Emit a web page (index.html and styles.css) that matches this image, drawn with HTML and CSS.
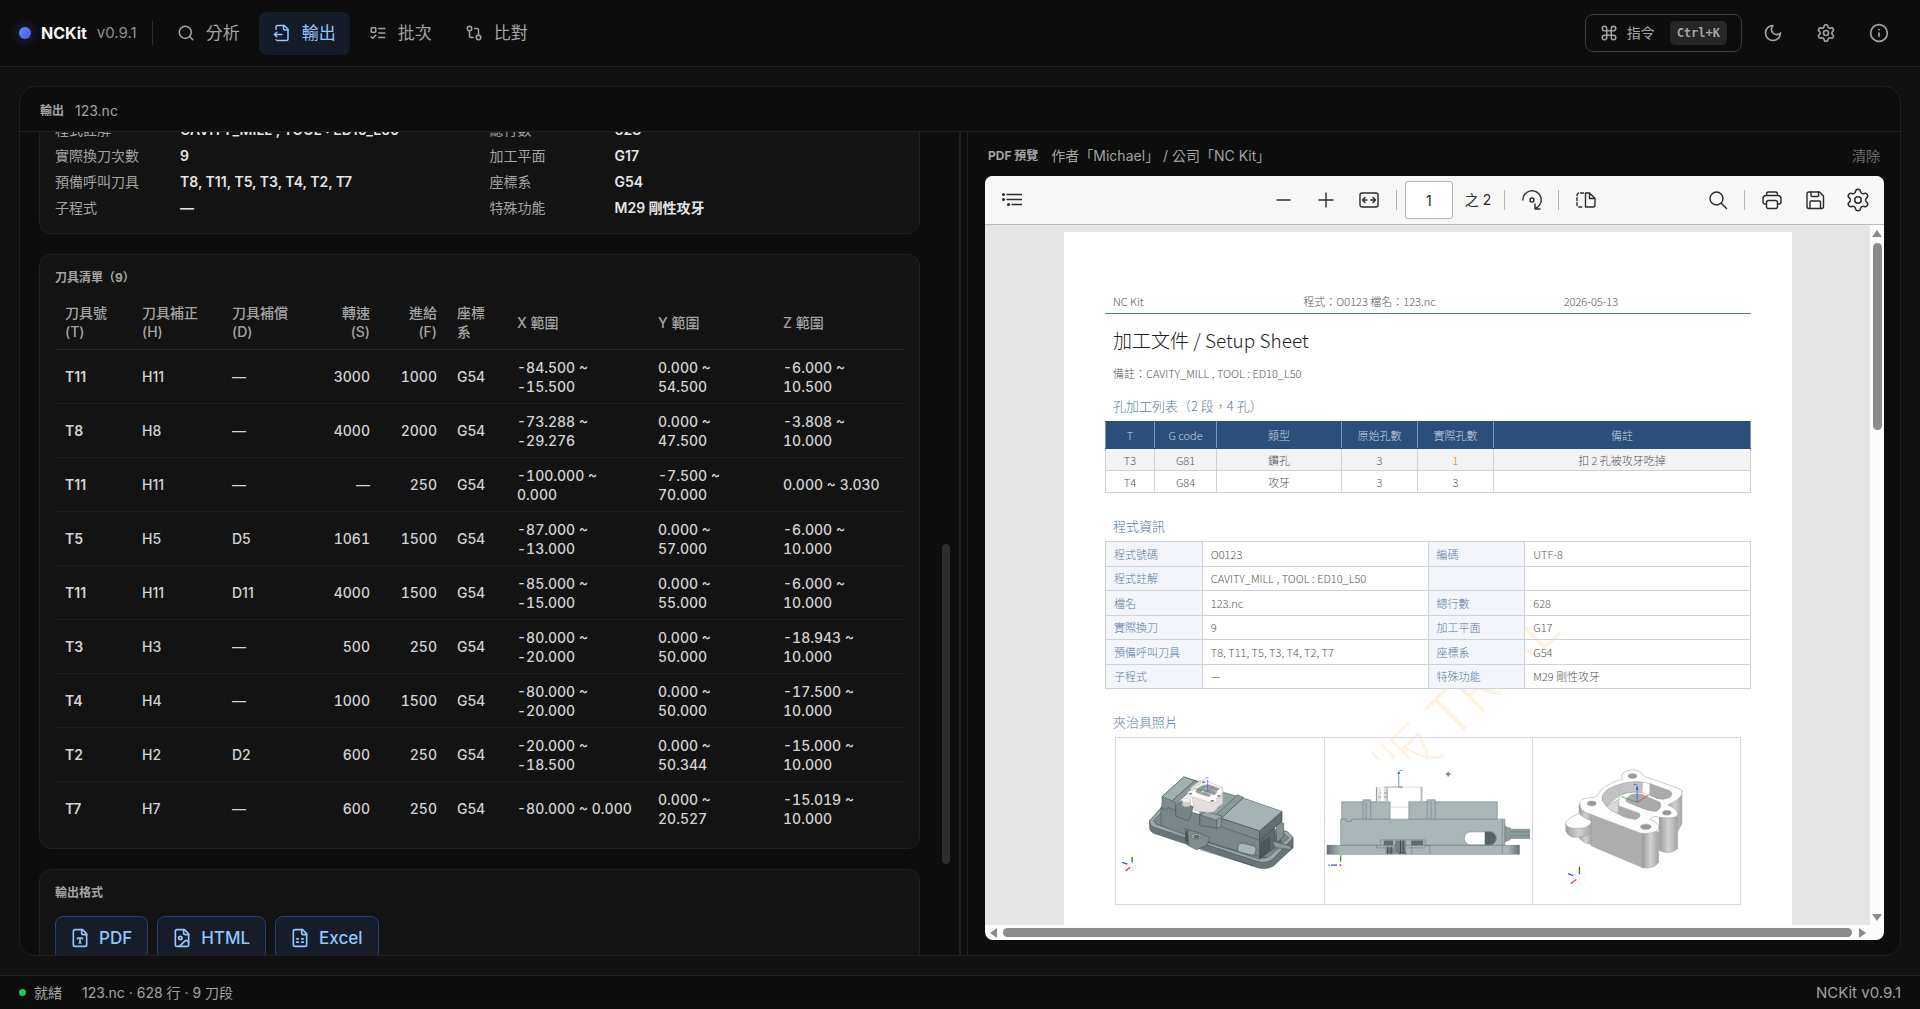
FILE: index.html
```html
<!DOCTYPE html>
<html lang="zh-Hant">
<head>
<meta charset="utf-8">
<title>NCKit</title>
<link rel="stylesheet" href="styles.css">
</head>
<body>
<svg class="sprite" aria-hidden="true">
  <symbol id="i-search" viewBox="0 0 24 24"><circle cx="11" cy="11" r="8"/><path d="m21 21-4.3-4.3"/></symbol>
  <symbol id="i-output" viewBox="0 0 24 24"><path d="M14 2v4a2 2 0 0 0 2 2h4"/><path d="M4 7V4a2 2 0 0 1 2-2h9l5 5v13a2 2 0 0 1-2 2H6a2 2 0 0 1-1.94-1"/><path d="m5 11-3 3"/><path d="m5 17-3-3h10"/></symbol>
  <symbol id="i-todo" viewBox="0 0 24 24"><rect x="3" y="5" width="6" height="6" rx="1"/><path d="m3 17 2 2 4-4M13 6h8M13 12h8M13 18h8"/></symbol>
  <symbol id="i-compare" viewBox="0 0 24 24"><circle cx="18" cy="18" r="3"/><circle cx="6" cy="6" r="3"/><path d="M13 6h3a2 2 0 0 1 2 2v7M11 18H8a2 2 0 0 1-2-2V9"/></symbol>
  <symbol id="i-command" viewBox="0 0 24 24"><path d="M15 6v12a3 3 0 1 0 3-3H6a3 3 0 1 0 3 3V6a3 3 0 1 0-3 3h12a3 3 0 1 0-3-3"/></symbol>
  <symbol id="i-moon" viewBox="0 0 24 24"><path d="M12 3a6 6 0 0 0 9 9 9 9 0 1 1-9-9Z"/></symbol>
  <symbol id="i-gear" viewBox="0 0 24 24"><path d="M9.671 4.136a2.34 2.34 0 0 1 4.659 0 2.34 2.34 0 0 0 3.319 1.915 2.34 2.34 0 0 1 2.33 4.033 2.34 2.34 0 0 0 0 3.831 2.34 2.34 0 0 1-2.33 4.033 2.34 2.34 0 0 0-3.319 1.915 2.34 2.34 0 0 1-4.659 0 2.34 2.34 0 0 0-3.32-1.915 2.34 2.34 0 0 1-2.33-4.033 2.34 2.34 0 0 0 0-3.831A2.34 2.34 0 0 1 6.35 6.051a2.34 2.34 0 0 0 3.319-1.915"/><circle cx="12" cy="12" r="3"/></symbol>
  <symbol id="i-info" viewBox="0 0 24 24"><circle cx="12" cy="12" r="10"/><path d="M12 16v-4M12 8h.01"/></symbol>
  <symbol id="i-pdf" viewBox="0 0 24 24"><path d="M15 2H6a2 2 0 0 0-2 2v16a2 2 0 0 0 2 2h12a2 2 0 0 0 2-2V7Z"/><path d="M14 2v4a2 2 0 0 0 2 2h4M9 13v-1h6v1M12 12v6M11 18h2"/></symbol>
  <symbol id="i-html" viewBox="0 0 24 24"><path d="M15 2H6a2 2 0 0 0-2 2v16a2 2 0 0 0 2 2h12a2 2 0 0 0 2-2V7Z"/><path d="M14 2v4a2 2 0 0 0 2 2h4"/><circle cx="10" cy="12" r="2"/><path d="m20 17-1.296-1.296a2.41 2.41 0 0 0-3.408 0L9 22"/></symbol>
  <symbol id="i-excel" viewBox="0 0 24 24"><path d="M15 2H6a2 2 0 0 0-2 2v16a2 2 0 0 0 2 2h12a2 2 0 0 0 2-2V7Z"/><path d="M14 2v4a2 2 0 0 0 2 2h4M8 13h2M14 13h2M8 17h2M14 17h2"/></symbol>
</svg>

<header class="topbar">
  <div class="brand"><span class="brand-dot"></span><strong class="brand-name">NCKit</strong><span class="brand-version">v0.9.1</span></div>
  <nav class="tabs">
    <button class="tab"><svg class="icon icon-md"><use href="#i-search"/></svg>分析</button>
    <button class="tab tab-active"><svg class="icon icon-md"><use href="#i-output"/></svg>輸出</button>
    <button class="tab"><svg class="icon icon-md"><use href="#i-todo"/></svg>批次</button>
    <button class="tab"><svg class="icon icon-md"><use href="#i-compare"/></svg>比對</button>
  </nav>
  <div class="tools">
    <button class="command"><svg class="icon icon-md"><use href="#i-command"/></svg>指令<kbd class="keys">Ctrl+K</kbd></button>
    <button class="tool" aria-label="主題"><svg class="icon icon-lg"><use href="#i-moon"/></svg></button>
    <button class="tool" aria-label="設定"><svg class="icon icon-lg"><use href="#i-gear"/></svg></button>
    <button class="tool" aria-label="關於"><svg class="icon icon-lg"><use href="#i-info"/></svg></button>
  </div>
</header>

<main class="workspace">
  <section class="panel">
    <header class="panel-head"><h1 class="label">輸出</h1><span>123.nc</span></header>
    <div class="split">
      <div class="pane">
        <div class="pane-content">
          <section class="card">
            <dl class="facts">
              <div class="fact"><dt>程式註解</dt><dd>CAVITY_MILL , TOOL : ED10_L50</dd></div>
              <div class="fact"><dt>總行數</dt><dd>628</dd></div>
              <div class="fact"><dt>實際換刀次數</dt><dd>9</dd></div>
              <div class="fact"><dt>加工平面</dt><dd>G17</dd></div>
              <div class="fact"><dt>預備呼叫刀具</dt><dd>T8, T11, T5, T3, T4, T2, T7</dd></div>
              <div class="fact"><dt>座標系</dt><dd>G54</dd></div>
              <div class="fact"><dt>子程式</dt><dd>—</dd></div>
              <div class="fact"><dt>特殊功能</dt><dd>M29 剛性攻牙</dd></div>
            </dl>
          </section>
          <section class="card">
            <h2 class="label">刀具清單（9）</h2>
            <table class="tool-table">
              <colgroup><col class="c-t"><col class="c-h"><col class="c-d"><col class="c-s"><col class="c-f"><col class="c-g"><col class="c-x"><col class="c-y"><col class="c-z"></colgroup>
              <thead><tr><th>刀具號<br>(T)</th><th>刀具補正<br>(H)</th><th>刀具補償<br>(D)</th><th class="right">轉速<br>(S)</th><th class="right">進給<br>(F)</th><th>座標系</th><th>X 範圍</th><th>Y 範圍</th><th>Z 範圍</th></tr></thead>
              <tbody>
                <tr><td class="tool-id">T11</td><td>H11</td><td>—</td><td class="right num">3000</td><td class="right num">1000</td><td>G54</td><td class="num">-84.500 ~ -15.500</td><td class="num">0.000 ~ 54.500</td><td class="num">-6.000 ~ 10.500</td></tr>
                <tr><td class="tool-id">T8</td><td>H8</td><td>—</td><td class="right num">4000</td><td class="right num">2000</td><td>G54</td><td class="num">-73.288 ~ -29.276</td><td class="num">0.000 ~ 47.500</td><td class="num">-3.808 ~ 10.000</td></tr>
                <tr><td class="tool-id">T11</td><td>H11</td><td>—</td><td class="right num">—</td><td class="right num">250</td><td>G54</td><td class="num">-100.000 ~ 0.000</td><td class="num">-7.500 ~ 70.000</td><td class="num">0.000 ~ 3.030</td></tr>
                <tr><td class="tool-id">T5</td><td>H5</td><td>D5</td><td class="right num">1061</td><td class="right num">1500</td><td>G54</td><td class="num">-87.000 ~ -13.000</td><td class="num">0.000 ~ 57.000</td><td class="num">-6.000 ~ 10.000</td></tr>
                <tr><td class="tool-id">T11</td><td>H11</td><td>D11</td><td class="right num">4000</td><td class="right num">1500</td><td>G54</td><td class="num">-85.000 ~ -15.000</td><td class="num">0.000 ~ 55.000</td><td class="num">-6.000 ~ 10.000</td></tr>
                <tr><td class="tool-id">T3</td><td>H3</td><td>—</td><td class="right num">500</td><td class="right num">250</td><td>G54</td><td class="num">-80.000 ~ -20.000</td><td class="num">0.000 ~ 50.000</td><td class="num">-18.943 ~ 10.000</td></tr>
                <tr><td class="tool-id">T4</td><td>H4</td><td>—</td><td class="right num">1000</td><td class="right num">1500</td><td>G54</td><td class="num">-80.000 ~ -20.000</td><td class="num">0.000 ~ 50.000</td><td class="num">-17.500 ~ 10.000</td></tr>
                <tr><td class="tool-id">T2</td><td>H2</td><td>D2</td><td class="right num">600</td><td class="right num">250</td><td>G54</td><td class="num">-20.000 ~ -18.500</td><td class="num">0.000 ~ 50.344</td><td class="num">-15.000 ~ 10.000</td></tr>
                <tr><td class="tool-id">T7</td><td>H7</td><td>—</td><td class="right num">600</td><td class="right num">250</td><td>G54</td><td class="num">-80.000 ~ 0.000</td><td class="num">0.000 ~ 20.527</td><td class="num">-15.019 ~ 10.000</td></tr>
              </tbody>
            </table>
          </section>
          <section class="card">
            <h2 class="label">輸出格式</h2>
            <div class="formats">
              <button class="format"><svg class="icon icon-lg"><use href="#i-pdf"/></svg>PDF</button>
              <button class="format"><svg class="icon icon-lg"><use href="#i-html"/></svg>HTML</button>
              <button class="format"><svg class="icon icon-lg"><use href="#i-excel"/></svg>Excel</button>
            </div>
          </section>
        </div>
        <span class="pane-thumb"></span>
      </div>
      <div class="resizer"></div>
      <div class="preview">
        <header class="preview-head"><h2 class="label">PDF 預覽</h2><span>作者「Michael」 / 公司「NC Kit」</span><button class="clear">清除</button></header>
        <div class="viewer">
          <div class="viewer-bar">
            <div class="bar-group">
              <button class="vbtn" aria-label="目錄"><svg class="vicon" viewBox="0 0 20 20"><path d="M5 4.500h15M5 9.500h15M10 14.500h10"/><g class="solid"><circle cx="1.500" cy="4.500" r="1.500"/><circle cx="1.500" cy="9.500" r="1.500"/><circle cx="6.500" cy="14.500" r="1.500"/></g></svg></button>
            </div>
            <div class="bar-group">
              <button class="vbtn" aria-label="縮小"><svg class="vicon" viewBox="0 0 20 20"><path d="M4 10h13"/></svg></button>
              <button class="vbtn" aria-label="放大"><svg class="vicon" viewBox="0 0 20 20"><path d="M3 10h14M10 3v14"/></svg></button>
              <button class="vbtn" aria-label="符合寬度"><svg class="vicon" viewBox="0 0 20 20"><rect x="1" y="3" width="18" height="14" rx="2"/><path d="M3.500 10H8M6 7.500 3.500 10 6 12.500M16.500 10H12M14 7.500l2.500 2.500-2.500 2.500"/></svg></button>
              <span class="bar-sep"></span>
              <input class="page-input" aria-label="頁碼" value="1">
              <span class="page-total">之 2</span>
              <span class="bar-sep"></span>
              <button class="vbtn" aria-label="旋轉"><svg class="vicon" viewBox="0 0 20 20"><path d="M.8 10A9.200 9.200 0 1 1 14 18.200M13 14v5h5"/><circle cx="10" cy="10" r="2"/></svg></button>
              <span class="bar-sep"></span>
              <button class="vbtn" aria-label="頁面檢視"><svg class="vicon" viewBox="0 0 20 20"><path d="M9.500 3v14H17a2 2 0 0 0 2-2V8.500L13.500 3ZM13.500 3v5.500H19"/><path d="M7.500 3H3a2 2 0 0 0-2 2v10a2 2 0 0 0 2 2h4.500" stroke-dasharray="3 2"/></svg></button>
            </div>
            <div class="bar-group bar-end">
              <button class="vbtn" aria-label="搜尋"><svg class="vicon" viewBox="0 0 20 20"><circle cx="8.500" cy="8.500" r="6.500"/><path d="m13.500 13.500 5 5"/></svg></button>
              <span class="bar-sep"></span>
              <button class="vbtn" aria-label="列印"><svg class="vicon" viewBox="0 0 20 20"><path d="M4.500 5.500V4a2 2 0 0 1 2-2h7a2 2 0 0 1 2 2v1.500M4.500 14H3a2 2 0 0 1-2-2V8.500a3 3 0 0 1 3-3h12a3 3 0 0 1 3 3V12a2 2 0 0 1-2 2h-1.500"/><rect x="4.500" y="10.500" width="11" height="8" rx="2"/></svg></button>
              <button class="vbtn" aria-label="儲存"><svg class="vicon" viewBox="0 0 20 20"><path d="M4 2h10.500L18.500 6v10.500a2 2 0 0 1-2 2H4a2 2 0 0 1-2-2V4a2 2 0 0 1 2-2Z"/><path d="M6 2v3.500a1 1 0 0 0 1 1h5.500a1 1 0 0 0 1-1V2M5 18.500V12a1 1 0 0 1 1-1h8.500a1 1 0 0 1 1 1v6.500"/></svg></button>
              <button class="vbtn" aria-label="檢視設定"><svg class="vicon vicon-lg" viewBox="0 0 24 24"><use href="#i-gear"/></svg></button>
            </div>
          </div>
          <div class="viewer-body">
            <div class="canvas">
              <article class="sheet">
                <div class="watermark">試用版 TRIAL</div>
                <header class="sheet-head"><span>NC Kit</span><span>程式：O0123 檔名：123.nc</span><span>2026-05-13</span></header>
                <h1 class="sheet-title">加工文件 / Setup Sheet</h1>
                <p class="sheet-note">備註：CAVITY_MILL , TOOL : ED10_L50</p>
                <h2 class="sheet-section">孔加工列表（2 段，4 孔）</h2>
                <table class="sheet-table holes">
                  <colgroup><col class="k-t"><col class="k-g"><col class="k-type"><col class="k-n"><col class="k-n"><col></colgroup>
                  <thead><tr><th>T</th><th>G code</th><th>類型</th><th>原始孔數</th><th>實際孔數</th><th>備註</th></tr></thead>
                  <tbody>
                    <tr class="shade"><td>T3</td><td>G81</td><td>鑽孔</td><td>3</td><td class="warn">1</td><td>扣 2 孔被攻牙吃掉</td></tr>
                    <tr><td>T4</td><td>G84</td><td>攻牙</td><td>3</td><td>3</td><td></td></tr>
                  </tbody>
                </table>
                <h2 class="sheet-section">程式資訊</h2>
                <table class="sheet-table program">
                  <colgroup><col class="p-key"><col><col class="p-key"><col></colgroup>
                  <tr><th>程式號碼</th><td>O0123</td><th>編碼</th><td>UTF-8</td></tr>
                  <tr><th>程式註解</th><td>CAVITY_MILL , TOOL : ED10_L50</td><th></th><td></td></tr>
                  <tr><th>檔名</th><td>123.nc</td><th>總行數</th><td>628</td></tr>
                  <tr><th>實際換刀</th><td>9</td><th>加工平面</th><td>G17</td></tr>
                  <tr><th>預備呼叫刀具</th><td>T8, T11, T5, T3, T4, T2, T7</td><th>座標系</th><td>G54</td></tr>
                  <tr><th>子程式</th><td>—</td><th>特殊功能</th><td>M29 剛性攻牙</td></tr>
                </table>
                <h2 class="sheet-section">夾治具照片</h2>
                <div class="photos">
                  <figure class="photo">
                    <svg viewBox="50 113 620 496">
                      <rect x="50" y="177" width="620" height="368" fill="#fff"/>
                      <g stroke="#3f4a4c" stroke-width="1.500" stroke-linejoin="round">
                        <path d="M150 360 184 322 560 392 578 410V440L520 494Q495 508 468 498L162 397Q150 391 150 380Z" fill="#687477"/>
                        <path d="M150 360 184 322 560 392 578 410 518 474Q495 490 468 480L160 378Q150 372 150 360Z" fill="#9aa7a9"/>
                        <path d="M162 360 186 334 548 396 565 410 510 464Q492 476 470 468L170 370Z" fill="#7c898b"/>
                        <path d="M184 318 228 318 478 400V474L320 424 250 400 184 374Z" fill="#7a8789"/>
                        <path d="M478 415 522 376V400L545 420 525 440 478 474Z" fill="#5c686b"/>
                        <path d="M528 376 540 362 550 368V408L528 424Z" fill="#839092"/>
                        <path d="M516 420 572 436V446L524 440Z" fill="#8b989a"/>
                        <path d="M187 288 252 229 300 244 228 306V330L205 320 199 328 187 322Z" fill="#7f8c8e"/>
                        <path d="M187 288 252 229 285 240 218 300Z" fill="#a3b0b2"/>
                        <path d="M218 300 285 240 300 245 230 308Z" fill="#8b989a"/>
                        <path d="M370 275 430 292 365 360 350 380 300 370 300 330Z" fill="#95a2a4"/>
                        <path d="M362 352 430 292 545 332 478 390Z" fill="#a6b3b5"/>
                        <path d="M362 352 478 390V418L360 376Z" fill="#7d8a8c"/>
                        <path d="M478 390 545 332V362L478 418Z" fill="#616d70"/>
                        <path d="M348 342 412 282 430 290 364 352V376L348 384Z" fill="#8c999b"/>
                        <path d="M228 312 244 300 280 318 274 342 266 360 228 346Z" fill="#778486"/>
                        <path d="M300 342 318 332 350 344V382L300 374Z" fill="#778486"/>
                        <path d="M300 342 318 332 368 346 348 358Z" fill="#9aa7a9"/>
                        <path d="M256 384 300 396 330 410 322 432 290 446 262 432Z" fill="#808d8f"/>
                        <ellipse cx="289" cy="406" rx="16" ry="8" fill="#a3b0b2"/><ellipse cx="290" cy="407" rx="8" ry="4" fill="#5f6b6e"/>
                        <path d="M258 395 264 388 266 430 256 418Z" fill="#4b5658"/>
                        <path d="M322 422Q440 460 500 470M300 446 460 494" fill="none"/>
                        <rect x="413" y="430" width="54" height="28" rx="12" transform="rotate(14 440 444)" fill="#a9b5b7"/>
                        <path d="M481 425 508 410V446L481 470Z" fill="#4d585a"/>
                      </g>
                      <g stroke="#b5adad" stroke-width="1.500">
                        <path d="M276 284 284 330 320 334Q345 338 352 320L368 308V262L300 240 272 262Z" fill="#e4dfdf"/>
                        <path fill-rule="evenodd" fill="#fbf9f9" d="M264 280Q262 270 280 268 290 254 302 250 296 238 314 238 330 244 368 262 370 275 364 282 368 290 350 292 356 306 338 308L284 290Q266 290 264 280ZM288 274Q292 254 326 252L358 264 350 272 322 262Q306 262 302 280ZM308 266 324 264 350 274 344 282 314 274ZM302 280 328 288 332 282 308 274Z"/>
                        <path d="M288 274Q292 254 326 252L358 264 350 272 322 262Q306 262 302 280ZM308 266 324 264 350 274 344 282 314 274ZM302 280 328 288 332 282 308 274Z" fill="#8d9a9c"/>
                        <path d="M248 300v14q12 8 24 0v-14" fill="#d4cfcf"/><ellipse cx="260" cy="299" rx="12" ry="7" fill="#f4f0f0"/>
                      </g>
                      <g fill="#7d8a8c"><ellipse cx="311" cy="245" rx="6" ry="3"/><ellipse cx="337" cy="301" rx="6" ry="3"/><ellipse cx="272" cy="279" rx="5" ry="3"/><ellipse cx="357" cy="286" rx="5" ry="3"/></g>
                      <g fill="none" stroke-width="2"><path d="M323 272V238M316 232h10" stroke="#3563e0"/><path d="m322 272-38-8" stroke="#3fa14a"/><path d="m322 272 20-14" stroke="#d04040"/></g>
                      <g fill="none" stroke-width="4"><path d="M98 484v-16" stroke="#2d7a32"/><path d="m84 489-16-5" stroke="#2a55dd"/><path d="m92 498-13 11" stroke="#dc3232"/></g>
                      <path d="m86 491 12-5 11 5v12l-11 6-12-6ZM86 491l12 5 11-5M98 496v13" fill="none" stroke="#ccc"/>
                    </svg>
                  </figure>
                  <figure class="photo">
                    <svg viewBox="674 113 620 496">
                      <defs><linearGradient id="end"><stop offset="0" stop-color="#657174"/><stop offset="1" stop-color="#a9b5b7"/></linearGradient><linearGradient id="end2"><stop offset="0" stop-color="#a9b5b7"/><stop offset="1" stop-color="#657174"/></linearGradient></defs>
                      <rect x="676" y="177" width="616" height="368" fill="#fff"/>
                      <g stroke="#667376" stroke-width="1.500">
                        <rect x="680" y="434" width="576" height="27" fill="#a9b5b7"/>
                        <rect x="680" y="434" width="40" height="27" fill="url(#end)" stroke="none"/><rect x="1222" y="434" width="34" height="27" fill="url(#end2)" stroke="none"/>
                        <path d="M721 356H1213V434H721Z" fill="#a9b5b7"/>
                        <path d="M724 304H788V298H811V304H869V356H753V363H738V356H724ZM925 304H980V298H1004V304H1190V356H925Z" fill="#a9b5b7"/>
                        <path d="M788 304v52M797 300v56M811 304v52M980 304v52M992 300v56M1004 304v52M1205 356v104" fill="none"/>
                        <path d="M1213 376l10 6h6v4h58v28h-58v4l-16 6Z" fill="#8e9b9d"/><path d="M1229 394h58M1229 406h58" fill="none"/>
                        <rect x="1091" y="394" width="96" height="39" rx="19" fill="#fff"/>
                        <path d="M1153 394h14a19 19 0 0 1 0 39h-14Z" fill="#566164"/>
                        <path d="M828 434v8h28v18M840 434v-16h134v18h14v24M856 420v20M882 434v26M934 434v26M922 442h52" fill="none"/>
                      </g>
                      <path d="M850 420h28v14h-28zM932 420h36v14h-36z" fill="#606c6e"/><path d="M858 440h22v20h-22zM884 420h32v38h-32z" fill="#748184"/><path d="M862 438v23M872 438v23M908 420v38M900 420v38M894 458h24" stroke="#333d3f" stroke-width="2.500"/>
                      <path d="M869 320h56M866 260h100v44" fill="none" stroke="#ccc" stroke-width="2"/>
                      <path d="M828 260h32v42h-32Z" fill="#e4e4e4"/><path d="M828 260v42M860 260v42M838 278h22M834 290h26M962 260v42" stroke="#999" stroke-width="3" fill="none"/><path d="M842 262h8v40h-8z" fill="#fff"/>
                      <g fill="none" stroke-width="2"><path d="M895 260V214M897 210h10" stroke="#3563e0"/><path d="M895 260H850" stroke="#62b66a"/><path d="M895 260h12" stroke="#d04040" stroke-width="3"/></g>
                      <path d="m891 220 4-8 4 8Z" fill="#2a55dd"/>
                      <path d="M1036 221h14M1043 214v14" stroke="#888" stroke-width="5"/>
                      <g fill="none" stroke-width="4"><path d="M721 484v-20" stroke="#35a03a"/><path d="M710 494h-18M684 494h4" stroke="#2a55dd"/></g>
                      <rect x="711" y="484" width="19" height="20" fill="none" stroke="#ddd"/><circle cx="720" cy="494" r="3" fill="#dc3232"/>
                    </svg>
                  </figure>
                  <figure class="photo">
                    <svg viewBox="98 113 620 496">
                      <defs><linearGradient id="cyl"><stop offset="0" stop-color="#9b9b9b"/><stop offset=".5" stop-color="#d2d2d2"/><stop offset="1" stop-color="#a3a3a3"/></linearGradient></defs>
                      <rect x="98" y="177" width="620" height="368" fill="#fff"/>
                      <g stroke="#999" stroke-width="1.500">
                        <path d="M500 290 544 270V370L534 388 500 400Z" fill="url(#cyl)"/>
                        <path d="M476 350H531V445Q505 465 476 450Z" fill="url(#cyl)"/>
                        <path d="M236 310 275 340V432Q250 430 236 412Z" fill="url(#cyl)"/>
                        <path d="M196 370Q235 400 275 366V398Q250 412 215 410 196 400 196 388Z" fill="url(#cyl)"/>
                        <path d="M196 370Q196 355 238 338L240 344Q262 358 275 362 268 384 228 384 196 382 196 370Z" fill="#fff"/>
                        <path d="M272 340 428 398V502L272 436Z" fill="#adadad"/>
                        <path d="M426 394H474V485Q462 505 426 502Z" fill="url(#cyl)"/>
                        <path fill-rule="evenodd" fill="#fdfdfd" d="M238 312Q236 292 268 292 284 292 288 288 306 252 366 236 356 212 394 208 420 208 432 228L534 264Q548 270 544 282 536 298 502 314 532 326 532 344 518 358 476 350 460 344 448 356 480 368 474 386 458 402 420 398L272 342Q240 334 238 312ZM306 300Q300 262 384 246 420 242 450 250L508 272Q518 280 508 290 490 300 470 294L424 276Q390 272 364 282 346 298 356 324 320 326 306 300ZM376 296Q390 276 424 282L478 306Q486 322 468 332 450 336 376 300ZM354 316 416 338Q424 350 404 356 376 354 352 340Z"/>
                        <path d="M306 300Q300 262 384 246 410 242 426 246L424 276Q390 272 364 282 344 294 318 318Z" fill="#c2c2c2"/>
                        <path d="M448 250 508 272Q518 280 508 290 490 300 470 294L448 284ZM378 296Q390 276 424 282L478 306Q486 322 468 332 450 336 378 304ZM356 318 416 340Q424 350 404 356 376 354 354 340Z" fill="#aaa"/>
                        <path d="M318 318 356 296 352 340Q330 332 318 318Z" fill="#d8d8d8"/>
                        <g fill="#999"><ellipse cx="396" cy="227" rx="13" ry="7"/><ellipse cx="274" cy="309" rx="13" ry="7"/><ellipse cx="499" cy="337" rx="13" ry="7"/><ellipse cx="436" cy="379" rx="16" ry="8"/></g>
                      </g>
                      <g fill="none" stroke-width="2.500"><path d="M410 306V256M399 252h10" stroke="#3563e0"/><path d="m410 306-46-17" stroke="#3fa14a"/><path d="m410 306 34-22" stroke="#d04040"/></g>
                      <path d="m406 268 4-12 4 12Z" fill="#2a55dd"/>
                      <g fill="none" stroke-width="4"><path d="M237 521v-22" stroke="#2d7a32"/><path d="m218 525-15-6" stroke="#2a55dd"/><path d="m228 537-17 12" stroke="#dc3232"/></g>
                      <path d="m220 521 17-7 17 7v22l-17 8-17-8ZM220 521l17 8 17-8M237 529v22" fill="none" stroke="#ddd"/>
                    </svg>
                  </figure>
                </div>
              </article>
            </div>
            <div class="vscroll"><span class="arrow arrow-up"></span><span class="vthumb"></span><span class="arrow arrow-down"></span></div>
            <div class="hscroll"><span class="arrow arrow-left"></span><span class="hthumb"></span><span class="arrow arrow-right"></span></div>
          </div>
        </div>
      </div>
    </div>
  </section>
</main>

<footer class="statusbar"><span class="status-dot"></span><span>就緒</span><span class="status-file">123.nc · 628 行 · 9 刀段</span><span class="status-version">NCKit v0.9.1</span></footer>
</body>
</html>
```

FILE: styles.css
```css
*, *::before, *::after { box-sizing: border-box; }

body {
  margin: 0;
  height: 100vh;
  display: flex;
  flex-direction: column;
  overflow: hidden;
  background: #111;
  color: #a3a3a3;
  font: 14px/20px Inter, "Noto Sans CJK TC", sans-serif;
}

h1, h2, p, dl, dd, figure { margin: 0; }
button { margin: 0; padding: 0; border: 0; background: none; color: inherit; font: inherit; cursor: pointer; }

.sprite { display: none; }
.icon { flex: none; fill: none; stroke: currentColor; stroke-width: 2; stroke-linecap: round; stroke-linejoin: round; }
.icon-md { width: 18px; height: 18px; }
.icon-lg { width: 20px; height: 20px; }
.label { font-size: 12px; font-weight: 700; line-height: 20px; }

/* Top bar */
.topbar {
  flex: none;
  height: 67px;
  display: flex;
  align-items: center;
  padding: 0 19px;
  background: #0d0d0d;
  border-bottom: 1px solid #202020;
}
.brand { display: flex; align-items: center; gap: 10px; padding-right: 15px; border-right: 1px solid #2b2b2b; line-height: 24px; }
.brand-dot { width: 12px; height: 12px; border-radius: 50%; background: linear-gradient(135deg, #5b94f8, #5a4df0); box-shadow: 0 0 12px rgba(88, 101, 242, .5); }
.brand-name { font-size: 16px; color: #f5f5f5; }
.brand-version { color: #8f8f8f; font-size: 15px; }
.tabs { display: flex; gap: 5px; margin-left: 10px; }
.tab { display: flex; align-items: center; gap: 11px; height: 43px; padding: 0 14px; border-radius: 8px; font-size: 17px; }
.tab-active { background: #141b29; color: #93c5fd; }
.tools { display: flex; align-items: center; gap: 8px; margin-left: auto; }
.command { display: flex; align-items: center; height: 38px; padding: 0 14px; gap: 9px; border: 1px solid #3c3c3c; border-radius: 8px; }
.keys { margin-left: 6px; padding: 0 7px; border-radius: 5px; background: #262626; font: 700 12px/24px "DejaVu Sans Mono", monospace; }
.tool { width: 45px; height: 40px; display: grid; place-items: center; }

/* Workspace */
.workspace { flex: 1; min-height: 0; display: flex; padding: 19px; }
.panel { flex: 1; min-width: 0; display: flex; flex-direction: column; overflow: hidden; background: #0d0d0d; border: 1px solid #202020; border-radius: 16px; }
.panel-head { flex: none; display: flex; align-items: center; gap: 11px; padding: 14px 20px 10px; border-bottom: 1px solid #202020; }
.split { flex: 1; min-height: 0; display: grid; grid-template-columns: 939fr 9px 932fr; }
.pane { position: relative; overflow: hidden; }
.pane-content { display: flex; flex-direction: column; gap: 20px; margin-top: -27px; padding: 0 39px 0 19px; }
.pane-thumb { position: absolute; top: 50%; right: 9px; width: 8px; height: 39%; border-radius: 4px; background: #2e2e2e; }
.resizer { border: solid #202020; border-width: 0 1px 0 2px; }
.card { padding: 13px 15px; background: #131313; border: 1px solid #202020; border-radius: 12px; }

.facts { display: grid; grid-template-columns: 1fr 1fr; gap: 6px 20px; padding: 1px 0 2px; }
.fact { display: flex; }
.fact dt { width: 125px; }
.fact dd { color: #e5e5e5; font-weight: 600; }

.tool-table { width: 100%; margin-top: 7px; table-layout: fixed; border-collapse: separate; border-spacing: 0; line-height: 19px; }
.tool-table th { height: 54px; padding: 8px 10px; border-bottom: 1px solid #262626; font-weight: 500; text-align: left; }
.tool-table td { height: 54px; padding: 7px 10px; border-bottom: 1px solid #1e1e1e; color: #d4d4d4; font-weight: 500; }
.tool-table tr:last-child td { height: 53px; border-bottom: 0; }
.tool-table .tool-id { font-weight: 600; }
.tool-table .right { text-align: right; }
.num { font-variant-numeric: tabular-nums; }
.c-t { width: 77px; }
.c-h { width: 90px; }
.c-d { width: 86px; }
.c-s { width: 72px; }
.c-f { width: 67px; }
.c-g { width: 60px; }
.c-y { width: 125px; }
.c-z { width: 131px; }

.formats { display: flex; gap: 9px; margin-top: 13px; }
.format { display: flex; align-items: center; gap: 9px; height: 44px; padding: 0 15px 0 14px; border: 1px solid #23427a; border-radius: 8px; background: #161c28; color: #93c5fd; font-size: 17px; font-weight: 500; }

/* Preview */
.preview { display: flex; flex-direction: column; min-width: 0; min-height: 0; padding: 0 16px 15px 17px; }
.preview-head { flex: none; display: flex; gap: 13px; padding: 14px 4px 10px 3px; }
.clear { margin-left: auto; color: #6b6b6b; }
.viewer { flex: 1; min-height: 0; display: flex; flex-direction: column; overflow: hidden; border-radius: 8px; background: #fcfcfc; }
.viewer-bar { flex: none; display: grid; grid-template-columns: 1fr auto 1fr; height: 49px; padding: 0 5px; background: #f7f7f7; border-bottom: 1px solid #bbb; color: #2b2b2b; }
.bar-group { display: flex; align-items: center; }
.bar-end { justify-content: flex-end; }
.vbtn { width: 43px; height: 40px; display: grid; place-items: center; }
.vicon { width: 20px; height: 20px; fill: none; stroke: currentColor; stroke-width: 1.4; stroke-linecap: round; stroke-linejoin: round; }
.vicon-lg { width: 26px; height: 26px; }
.vicon .solid { fill: currentColor; stroke: none; }
.bar-sep { width: 1px; height: 20px; margin: 0 5px; background: #b5b5b5; }
.page-input { width: 48px; height: 38px; margin: 0 12px 0 3px; padding: 0; border: 1px solid #b3b3b3; border-radius: 3px; background: #fff; color: #222; font: inherit; text-align: center; }
.page-total { margin-right: 8px; }

.viewer-body { flex: 1; min-height: 0; display: grid; grid-template: 1fr 15px / 1fr 14px; }
.canvas { overflow: hidden; padding: 7px 78px 0 79px; background: #e5e5e5; }
.vscroll { display: flex; flex-direction: column; align-items: center; padding: 5px 0 4px; }
.vthumb { width: 9px; height: 27%; margin: 6px 0 auto; border-radius: 5px; background: #8b8b8b; }
.hscroll { display: flex; align-items: center; padding: 0 4px 0 5px; }
.hthumb { flex: 1; height: 9px; margin: 0 7px 0 6px; border-radius: 5px; background: #8b8b8b; }
.arrow { flex: none; border: 0 solid transparent; }
.arrow-up { border-width: 0 5px 7px; border-bottom-color: #8b8b8b; }
.arrow-down { border-width: 7px 5px 0; border-top-color: #8b8b8b; }
.arrow-left { border-width: 5px 7px 5px 0; border-right-color: #8b8b8b; }
.arrow-right { border-width: 5px 0 5px 7px; border-left-color: #8b8b8b; }

/* Document page */
.sheet { position: relative; z-index: 0; aspect-ratio: 210 / 297; padding: 57px 41px 0; background: #fff; color: #555; font: 300 11px/20px "Noto Sans CJK TC", sans-serif; }
.watermark { position: absolute; z-index: -1; top: 49%; left: 49%; transform: translate(-50%, -50%) rotate(-45deg); color: #fef2e0; font-size: 60px; line-height: 60px; white-space: nowrap; }
.sheet-head { display: grid; grid-template-columns: 190fr 260fr 187fr; padding-left: 8px; border-bottom: 1px solid #5b7aa5; line-height: 24px; }
.sheet-title { margin: 12px 8px 9px; color: #222; font-size: 19px; font-weight: 300; line-height: 28px; }
.sheet-note { margin: 0 8px; }
.sheet-section { margin: 23px 8px 5px; color: #5b7aa5; font-size: 13px; font-weight: 300; line-height: 20px; }
.sheet-note + .sheet-section { margin-top: 13px; }
.sheet-table { width: 100%; table-layout: fixed; border-collapse: collapse; line-height: 16px; }
.sheet-table th, .sheet-table td { padding: 0 8px; border: 1px solid #ced2da; font-weight: 300; }
.holes { text-align: center; }
.holes th { height: 27px; background: #2b4e7b; color: #c6d2e2; border-color: #2b4e7b #7f97b5; }
.holes td { height: 22px; }
.holes .shade { background: #f3f3f3; }
.holes .warn { color: #d97a2b; }
.k-t { width: 49px; }
.k-g { width: 62px; }
.k-type { width: 125px; }
.k-n { width: 76px; }
.program { height: 148px; }
.program th { background: #f3f5fa; color: #5b7aa5; text-align: left; }
.p-key { width: 15%; }
.photos { display: grid; grid-template-columns: repeat(3, 1fr); margin: 0 10px; border: 1px solid #d5d7db; }
.photo + .photo { border-left: 1px solid #d5d7db; }
.photo svg { display: block; width: 100%; }

/* Status bar */
.statusbar { flex: none; height: 34px; display: flex; align-items: center; padding: 0 19px; background: #0d0d0d; border-top: 1px solid #202020; }
.status-dot { width: 7px; height: 7px; margin-right: 8px; border-radius: 50%; background: #22c55e; }
.status-file { margin-left: 20px; }
.status-version { margin-left: auto; font-size: 15px; }
```
